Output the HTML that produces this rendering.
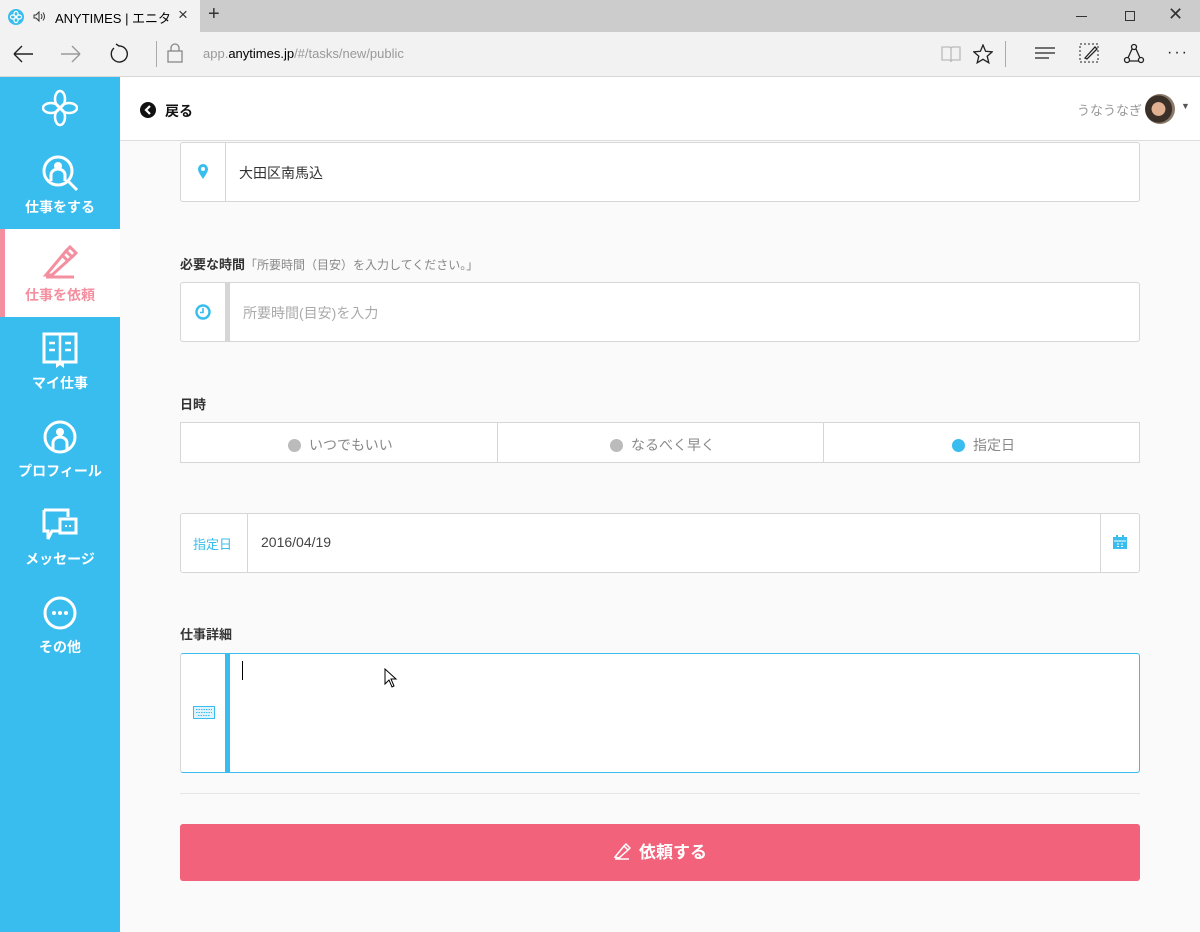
<!DOCTYPE html>
<html><head><meta charset="utf-8"><style>
*{box-sizing:border-box;margin:0;padding:0}
body{width:1200px;height:932px;overflow:hidden;font-family:"Liberation Sans","Noto Sans CJK JP",sans-serif;background:#fafafa;position:relative}
.abs{position:absolute}
.tabbar{left:0;top:0;width:1200px;height:32px;background:#cccccc}
.tab{left:0;top:0;width:200px;height:32px;background:#f2f2f2}
.addr{left:0;top:32px;width:1200px;height:45px;background:#f2f2f2;border-bottom:1px solid #d8d8d8}
.side{left:0;top:77px;width:120px;height:855px;background:#38bdee}
.nav{position:absolute;left:0;width:120px;height:88px;text-align:center;color:#fff;font-weight:bold;font-size:14px}
.nav span{position:absolute;left:0;right:0;top:56px}
.nav svg{position:absolute;left:42px;top:14px}
.head{left:120px;top:77px;width:1080px;height:64px;background:#fff;border-bottom:1px solid #ddd}
.box{position:absolute;left:180px;width:960px;background:#fff;border:1px solid #d6d6d6;border-radius:3px}
.lbl{position:absolute;left:180px;font-size:13px;font-weight:bold;color:#333}
</style></head><body>
<div class="abs tabbar"></div>
<div class="abs tab"></div>
<svg class="abs" style="left:8px;top:9px" width="16" height="16" viewBox="0 0 16 16"><circle cx="8" cy="8" r="8" fill="#38bdee"/><g fill="none" stroke="#fff" stroke-width="1.2"><ellipse cx="8" cy="5" rx="2" ry="2.6"/><ellipse cx="8" cy="11" rx="2" ry="2.6"/><ellipse cx="5" cy="8" rx="2.6" ry="2"/><ellipse cx="11" cy="8" rx="2.6" ry="2"/></g></svg>
<svg class="abs" style="left:33px;top:11px" width="14" height="11"><path d="M1 4H3L6 1V10L3 7H1Z" fill="none" stroke="#333"/><path d="M8 3Q10 5.5 8 8M10 1.5Q13 5.5 10 9.5" fill="none" stroke="#333"/></svg>
<div class="abs" style="left:55px;top:8px;font-size:13px;color:#000;width:115px;overflow:hidden;white-space:nowrap">ANYTIMES | エニタイムズ</div>
<div class="abs" style="left:178px;top:5px;font-size:17px;color:#333">×</div>
<div class="abs" style="left:208px;top:3px;font-size:20px;color:#333">+</div>
<div class="abs" style="left:1076px;top:16px;width:11px;height:1px;background:#333"></div>
<div class="abs" style="left:1125px;top:11px;width:10px;height:10px;border:1px solid #333"></div>
<div class="abs" style="left:1168px;top:4px;font-size:18px;color:#333">✕</div>
<div class="abs addr"></div>
<svg class="abs" style="left:12px;top:44px" width="22" height="20"><path d="M2 10H21M2 10L10 2M2 10L10 18" stroke="#222" stroke-width="1.4" fill="none"/></svg>
<svg class="abs" style="left:60px;top:44px" width="22" height="20"><path d="M20 10H1M20 10L12 2M20 10L12 18" stroke="#999" stroke-width="1.4" fill="none"/></svg>
<svg class="abs" style="left:108px;top:43px" width="22" height="22"><path d="M6 5A8 8 0 1 0 11 3L8 1" stroke="#222" stroke-width="1.4" fill="none"/></svg>
<div class="abs" style="left:156px;top:41px;width:1px;height:26px;background:#aaa"></div>
<svg class="abs" style="left:167px;top:43px" width="16" height="20"><rect x="1" y="8" width="14" height="11" fill="none" stroke="#888" stroke-width="1.3"/><path d="M4 8V5a4 4 0 0 1 8 0v3" fill="none" stroke="#888" stroke-width="1.3"/></svg>
<div class="abs" style="left:203px;top:46px;font-size:13px;color:#999">app.<span style="color:#000">anytimes.jp</span>/#/tasks/new/public</div>
<svg class="abs" style="left:941px;top:45px" width="20" height="18"><path d="M1 2H8Q10 2 10 4V17Q10 15 8 15H1Z M19 2H12Q10 2 10 4V17Q10 15 12 15H19Z" fill="none" stroke="#bbb" stroke-width="1.3"/></svg>
<svg class="abs" style="left:973px;top:44px" width="20" height="20"><path d="M10 1L12.6 7.3L19.3 7.8L14.2 12.2L15.8 18.8L10 15.3L4.2 18.8L5.8 12.2L0.7 7.8L7.4 7.3Z" fill="none" stroke="#222" stroke-width="1.3"/></svg>
<div class="abs" style="left:1005px;top:41px;width:1px;height:26px;background:#aaa"></div>
<svg class="abs" style="left:1035px;top:46px" width="22" height="14"><path d="M0 2H20M0 7H20M0 12H14" stroke="#222" stroke-width="1.3"/></svg>
<svg class="abs" style="left:1079px;top:43px" width="22" height="22"><rect x="1" y="1" width="18" height="18" fill="none" stroke="#222" stroke-dasharray="2 2"/><path d="M6 15L16 4L18 6L8 16Z" fill="none" stroke="#222" stroke-width="1.3"/></svg>
<svg class="abs" style="left:1123px;top:43px" width="22" height="22"><circle cx="11" cy="4" r="2.5" fill="none" stroke="#222" stroke-width="1.3"/><circle cx="4" cy="17" r="2.5" fill="none" stroke="#222" stroke-width="1.3"/><circle cx="18" cy="17" r="2.5" fill="none" stroke="#222" stroke-width="1.3"/><path d="M9 6L5 15M13 6L17 15M6 18H16" stroke="#222" stroke-width="1.3"/></svg>
<div class="abs" style="left:1167px;top:44px;font-size:16px;color:#222;letter-spacing:2px">···</div>

<div class="abs side">
<svg class="abs" style="left:42px;top:12px" width="36" height="38" viewBox="0 0 36 38"><g fill="none" stroke="#fff" stroke-width="2.5"><ellipse cx="18" cy="10" rx="5" ry="8"/><ellipse cx="18" cy="28" rx="5" ry="8"/><ellipse cx="9" cy="19" rx="8" ry="5"/><ellipse cx="27" cy="19" rx="8" ry="5"/></g></svg>
<div class="nav" style="top:64px"><svg width="38" height="38" viewBox="0 0 38 38"><circle cx="16" cy="16" r="14" fill="none" stroke="#fff" stroke-width="3"/><path d="M26 26L35 35" stroke="#fff" stroke-width="3"/><circle cx="16" cy="11" r="4" fill="#fff"/><path d="M9 26V20a7 6 0 0 1 14 0v6" fill="none" stroke="#fff" stroke-width="3"/></svg><span>仕事をする</span></div>
<div class="nav" style="top:152px;background:#fff;color:#f48fa0"><div style="position:absolute;left:0;top:0;width:5px;height:88px;background:#f48fa0"></div><svg width="38" height="38" viewBox="0 0 38 38"><path d="M4 32L24 8L30 14L10 32Z M20 12L26 18" fill="none" stroke="#f48fa0" stroke-width="3"/><path d="M24 8L28 4L34 10L30 14M4 34H32" fill="none" stroke="#f48fa0" stroke-width="3"/></svg><span>仕事を依頼</span></div>
<div class="nav" style="top:240px"><svg width="38" height="38" viewBox="0 0 38 38"><rect x="2" y="3" width="32" height="28" fill="none" stroke="#fff" stroke-width="3"/><path d="M18 3V31M7 12H13M7 19H13M23 12H29M23 19H29" stroke="#fff" stroke-width="2.5"/><path d="M14 31V37L18 34L22 37V31Z" fill="#fff"/></svg><span>マイ仕事</span></div>
<div class="nav" style="top:328px"><svg width="38" height="38" viewBox="0 0 38 38"><circle cx="18" cy="18" r="15" fill="none" stroke="#fff" stroke-width="3"/><circle cx="18" cy="13" r="4" fill="#fff"/><path d="M11 31V24a7 6 0 0 1 14 0v7" fill="none" stroke="#fff" stroke-width="3"/></svg><span>プロフィール</span></div>
<div class="nav" style="top:416px"><svg width="38" height="38" viewBox="0 0 38 38"><path d="M2 3H26V10M18 24H10L6 32V24H2V3" fill="none" stroke="#fff" stroke-width="3"/><rect x="18" y="12" width="16" height="14" fill="none" stroke="#fff" stroke-width="3"/><rect x="23" y="18" width="2" height="2" fill="#fff"/><rect x="27" y="18" width="2" height="2" fill="#fff"/></svg><span>メッセージ</span></div>
<div class="nav" style="top:504px"><svg width="38" height="38" viewBox="0 0 38 38"><circle cx="18" cy="18" r="15" fill="none" stroke="#fff" stroke-width="3"/><circle cx="12" cy="18" r="2" fill="#fff"/><circle cx="18" cy="18" r="2" fill="#fff"/><circle cx="24" cy="18" r="2" fill="#fff"/></svg><span>その他</span></div>
</div>

<div class="abs head"></div>
<svg class="abs" style="left:140px;top:102px" width="16" height="16"><circle cx="8" cy="8" r="8" fill="#111"/><path d="M10 4L6 8L10 12" stroke="#fff" stroke-width="2.2" fill="none"/></svg>
<div class="abs" style="left:165px;top:101px;font-size:14px;font-weight:bold;color:#111">戻る</div>
<div class="abs" style="left:1077px;top:100px;font-size:13px;color:#999">うなうなぎ</div>
<div class="abs" style="left:1145px;top:94px;width:30px;height:30px;border-radius:50%;background:radial-gradient(circle at 45% 50%,#e0b090 0 30%,#3a3028 32% 60%,#8a7a6a 62%)"></div>
<div class="abs" style="left:1181px;top:101px;font-size:9px;color:#555">▼</div>

<div class="box" style="top:142px;height:60px">
<div style="position:absolute;left:44px;top:0;width:1px;height:58px;background:#d6d6d6"></div>
<svg style="position:absolute;left:16px;top:20px" width="12" height="17"><path d="M6 16C2 10 1 8 1 6a5 5 0 0 1 10 0c0 2-1 4-5 10Z" fill="#38bdee"/><circle cx="6" cy="6" r="2" fill="#fff"/></svg>
<div style="position:absolute;left:58px;top:20px;font-size:14px;color:#333">大田区南馬込</div></div>

<div class="lbl" style="top:254px">必要な時間<span style="font-weight:normal;color:#888;font-size:12px">「所要時間（目安）を入力してください。」</span></div>
<div class="box" style="top:282px;height:60px">
<div style="position:absolute;left:44px;top:0;width:5px;height:58px;background:#d6d6d6"></div>
<svg style="position:absolute;left:14px;top:21px" width="16" height="16"><circle cx="8" cy="8" r="6.5" fill="none" stroke="#38bdee" stroke-width="2.4"/><path d="M8 4V8.5H5" stroke="#38bdee" stroke-width="1.6" fill="none"/></svg>
<div style="position:absolute;left:62px;top:20px;font-size:14px;color:#aaa">所要時間(目安)を入力</div></div>

<div class="lbl" style="top:394px">日時</div>
<div class="box" style="top:422px;height:41px;border-radius:0;font-size:14px;color:#888">
<div style="position:absolute;left:316px;top:0;width:1px;height:39px;background:#d6d6d6"></div>
<div style="position:absolute;left:642px;top:0;width:1px;height:39px;background:#d6d6d6"></div>
<div style="position:absolute;left:107px;top:12px"><span style="display:inline-block;width:13px;height:13px;border-radius:50%;background:#bbb;vertical-align:-2px;margin-right:8px"></span>いつでもいい</div>
<div style="position:absolute;left:429px;top:12px"><span style="display:inline-block;width:13px;height:13px;border-radius:50%;background:#bbb;vertical-align:-2px;margin-right:8px"></span>なるべく早く</div>
<div style="position:absolute;left:771px;top:12px"><span style="display:inline-block;width:13px;height:13px;border-radius:50%;background:#38bdee;vertical-align:-2px;margin-right:8px"></span>指定日</div>
</div>

<div class="box" style="top:513px;height:60px">
<div style="position:absolute;left:66px;top:0;width:1px;height:58px;background:#d6d6d6"></div>
<div style="position:absolute;left:919px;top:0;width:1px;height:58px;background:#d6d6d6"></div>
<div style="position:absolute;left:12px;top:20px;font-size:13px;color:#38bdee">指定日</div>
<div style="position:absolute;left:80px;top:20px;font-size:14px;color:#444">2016/04/19</div>
<svg style="position:absolute;left:932px;top:21px" width="14" height="14"><rect x="0" y="2" width="14" height="12" fill="#38bdee"/><path d="M1 6H13M4 9H6M8 9H10M4 11.5H6M8 11.5H10" stroke="#fff"/><rect x="3" y="0" width="2" height="3" fill="#38bdee"/><rect x="9" y="0" width="2" height="3" fill="#38bdee"/></svg>
</div>

<div class="lbl" style="top:624px">仕事詳細</div>
<div class="box" style="top:653px;height:120px;border-color:#38bdee;border-left-color:#d6d6d6">
<div style="position:absolute;left:44px;top:-1px;width:5px;height:120px;background:#38bdee"></div>
<svg style="position:absolute;left:12px;top:52px" width="22" height="13"><rect x="0.5" y="0.5" width="21" height="12" fill="#dff3fc" stroke="#38bdee"/><path d="M3 3.5H19M3 6.5H19M5 9.5H17" stroke="#38bdee" stroke-dasharray="1.5 1"/></svg>
<div style="position:absolute;left:61px;top:7px;width:1px;height:19px;background:#000"></div>
</div>
<svg class="abs" style="left:384px;top:668px" width="14" height="20"><path d="M1 1V16L5 12L8 19L10 18L7 11H12Z" fill="#fff" stroke="#000"/></svg>

<div class="abs" style="left:180px;top:793px;width:960px;height:1px;background:#e6e6e6"></div>
<div class="abs" style="left:180px;top:824px;width:960px;height:57px;background:#f2627a;border-radius:3px;color:#fff;font-size:17px;font-weight:bold;text-align:center;line-height:57px">
<svg width="18" height="18" style="vertical-align:-2px;margin-right:8px"><path d="M2 15L11 4L15 8L6 16Z M11 4L13 2L17 6L15 8M2 17H16" fill="none" stroke="#fff" stroke-width="1.5"/></svg>依頼する</div>
</body></html>
